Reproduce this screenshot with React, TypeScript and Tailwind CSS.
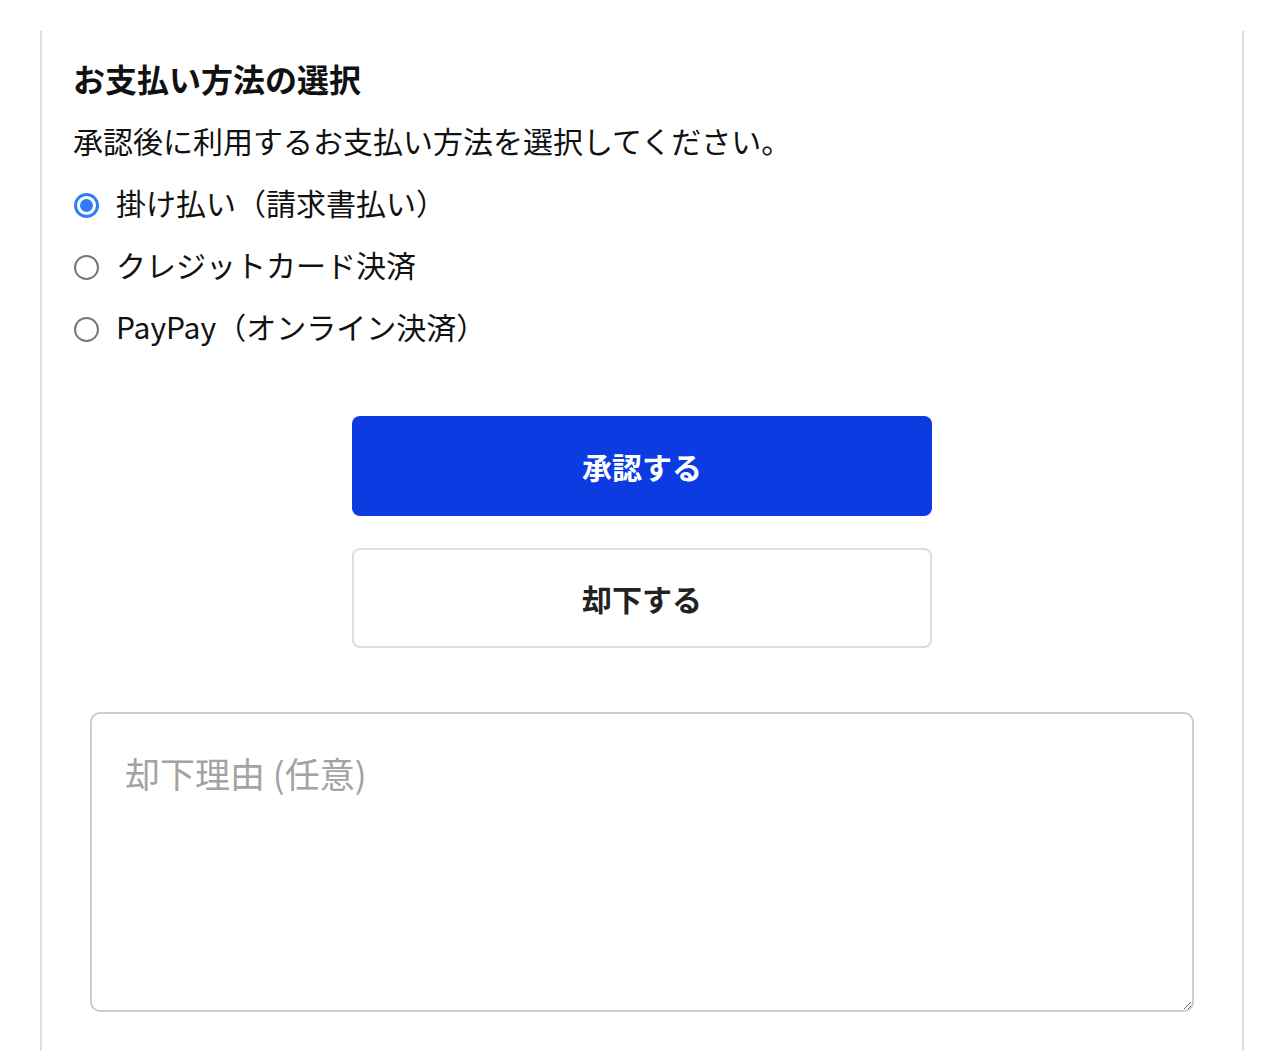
import { useState } from 'react'

const methods = [
  { id: 'invoice', label: '掛け払い（請求書払い）' },
  { id: 'card', label: 'クレジットカード決済' },
  { id: 'paypay', label: 'PayPay（オンライン決済）' }
]

function Radio({ checked }: { checked: boolean }) {
  if (checked) {
    return (
      <span className="mt-[6px] flex h-[25px] w-[25px] shrink-0 items-center justify-center rounded-full border-[3px] border-[#2f7cf6] bg-white">
        <span className="h-[13px] w-[13px] rounded-full bg-[#2f7cf6]" />
      </span>
    )
  }
  return <span className="mt-[6px] h-[25px] w-[25px] shrink-0 rounded-full border-2 border-[#767676] bg-white" />
}

export default function App() {
  const [method, setMethod] = useState('invoice')
  const [reason, setReason] = useState('')

  return (
    <div className="min-h-screen bg-white pt-[31px] font-['Noto_Sans_CJK_JP','Noto_Sans',sans-serif] text-[#111]">
      <div className="mx-[40px] w-[1204px] border-x-2 border-[#dedede] pb-[80px]">
        <div className="px-[32px] pt-[16px]">
          <h2 className="-ml-[1px] flex h-[62px] items-center text-[32px] font-bold leading-none">お支払い方法の選択</h2>
          <p className="-ml-[1px] flex h-[62px] items-center text-[30px] leading-none">承認後に利用するお支払い方法を選択してください。</p>
          {methods.map((m) => (
            <label
              key={m.id}
              className="flex h-[62px] cursor-pointer items-center gap-[17px] text-[30px] leading-none"
              onClick={() => setMethod(m.id)}
            >
              <Radio checked={method === m.id} />
              <span>{m.label}</span>
            </label>
          ))}
        </div>

        <div className="mt-[59px] flex flex-col items-center gap-[32px]">
          <button className="flex h-[100px] w-[580px] items-center justify-center rounded-[8px] bg-[#0b3be1] text-[30px] font-bold text-white">
            承認する
          </button>
          <button className="flex h-[100px] w-[580px] items-center justify-center rounded-[8px] border-2 border-[#dedede] bg-white text-[30px] font-bold text-[#222]">
            却下する
          </button>
        </div>

        <div className="mt-[64px] px-[48px]">
          <textarea
            value={reason}
            onChange={(e) => setReason(e.target.value)}
            placeholder="却下理由 (任意)"
            className="block h-[300px] w-full rounded-[10px] border-2 border-[#cccccc] px-[33px] py-[40px] text-[35px] leading-[1.1] outline-none placeholder:text-[#a3a3a3]"
          />
        </div>
      </div>
    </div>
  )
}
